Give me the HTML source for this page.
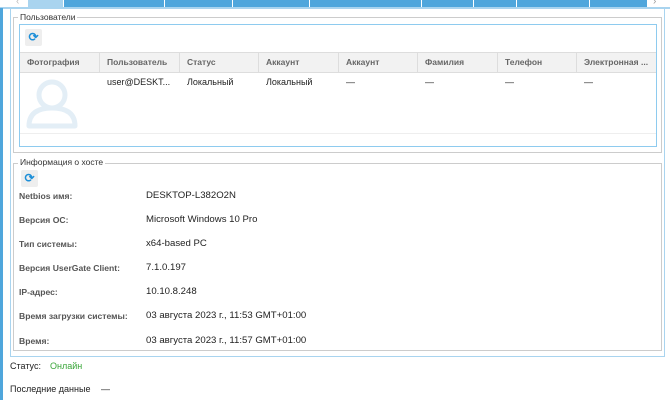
<!DOCTYPE html>
<html><head><meta charset="utf-8"><style>
*{margin:0;padding:0;box-sizing:border-box}
body{width:670px;height:400px;background:#fff;font-family:"Liberation Sans",sans-serif;font-size:9px;color:#222;position:relative;overflow:hidden}
.a{position:absolute}
.tab{position:absolute;top:0;height:7px;background:#4fa6dc;border-right:1px solid #fff}
.lbl{position:absolute;left:19px;font-weight:bold;color:#555;font-size:8.6px}
.val{position:absolute;left:146px;font-size:9.6px;color:#222}
.th{position:absolute;top:52px;height:21px;line-height:21px;padding-left:7px;font-weight:bold;color:#666;border-right:1px solid #ddd;font-size:8.5px}
.td{position:absolute;top:77px;padding-left:7px;font-size:9px}
</style></head><body>
<div class="a" style="left:0;top:7px;width:670px;height:2px;background:#a9d4ef"></div>
<div class="tab" style="left:28px;width:36px;background:#a9d4ef"></div>
<div class="tab" style="left:64px;width:101px"></div>
<div class="tab" style="left:165px;width:68px"></div>
<div class="tab" style="left:233px;width:77px"></div>
<div class="tab" style="left:310px;width:112px"></div>
<div class="tab" style="left:422px;width:52px"></div>
<div class="tab" style="left:474px;width:43px"></div>
<div class="tab" style="left:517px;width:73px"></div>
<div class="tab" style="left:590px;width:58px"></div>
<div class="a" style="left:16px;top:-4px;color:#bbb;font-size:10px">‹</div>
<div class="a" style="left:653px;top:-4px;color:#999;font-size:10px">›</div>
<div class="a" style="left:0;top:8px;width:3px;height:392px;background:#4fa6dc"></div>
<div class="a" style="left:10px;top:8px;width:655px;height:349px;border:1px solid #a9d4ef;border-top:none"></div>
<div class="a" style="left:13px;top:17px;width:649px;height:136px;border:1px solid #ccc"></div>
<div class="a" style="left:18px;top:12px;background:#fff;padding:0 2px;font-size:8.5px;color:#333">Пользователи</div>
<div class="a" style="left:19px;top:24px;width:638px;height:123px;border:1px solid #8ecbef"></div>
<div class="a" style="left:25px;top:29px;width:17px;height:17px;background:#eee;border-radius:2px;color:#1e8fd8;font-size:12px;line-height:17px;text-align:center;font-weight:bold">⟳</div>
<div class="a" style="left:20px;top:52px;width:636px;height:21px;background:#f2f2f2;border-top:1px solid #ddd;border-bottom:1px solid #ddd"></div>
<div class="th" style="left:20px;width:80px">Фотография</div>
<div class="th" style="left:100px;width:80px">Пользователь</div>
<div class="th" style="left:180px;width:79px">Статус</div>
<div class="th" style="left:259px;width:80px">Аккаунт</div>
<div class="th" style="left:339px;width:79px">Аккаунт</div>
<div class="th" style="left:418px;width:80px">Фамилия</div>
<div class="th" style="left:498px;width:79px">Телефон</div>
<div class="th" style="left:577px;width:79px;border:none">Электронная ...</div>
<div class="td" style="left:100px">user@DESKT...</div>
<div class="td" style="left:180px">Локальный</div>
<div class="td" style="left:259px">Локальный</div>
<div class="td" style="left:339px">—</div>
<div class="td" style="left:418px">—</div>
<div class="td" style="left:498px">—</div>
<div class="td" style="left:577px">—</div>
<div class="a" style="left:20px;top:133px;width:636px;height:1px;background:#eee"></div>
<svg class="a" style="left:25px;top:76px" width="56" height="54"><circle cx="27" cy="19" r="13" fill="none" stroke="#e3eef6" stroke-width="5"/><path d="M4 50 Q4 32 27 32 Q50 32 50 50 Z" fill="none" stroke="#e3eef6" stroke-width="5" stroke-linejoin="round"/></svg>
<div class="a" style="left:13px;top:163px;width:649px;height:188px;border:1px solid #ccc"></div>
<div class="a" style="left:18px;top:157px;background:#fff;padding:0 2px;font-size:8.5px;color:#333">Информация о хосте</div>
<div class="a" style="left:21px;top:170px;width:17px;height:17px;background:#eee;border-radius:2px;color:#1e8fd8;font-size:12px;line-height:17px;text-align:center;font-weight:bold">⟳</div>
<div class="lbl" style="top:191px">Netbios имя:</div><div class="val" style="top:190px">DESKTOP-L382O2N</div>
<div class="lbl" style="top:215px">Версия ОС:</div><div class="val" style="top:214px">Microsoft Windows 10 Pro</div>
<div class="lbl" style="top:239px">Тип системы:</div><div class="val" style="top:238px">x64-based PC</div>
<div class="lbl" style="top:263px">Версия UserGate Client:</div><div class="val" style="top:262px">7.1.0.197</div>
<div class="lbl" style="top:287px">IP-адрес:</div><div class="val" style="top:286px">10.10.8.248</div>
<div class="lbl" style="top:311px">Время загрузки системы:</div><div class="val" style="top:310px">03 августа 2023 г., 11:53 GMT+01:00</div>
<div class="lbl" style="top:336px">Время:</div><div class="val" style="top:335px">03 августа 2023 г., 11:57 GMT+01:00</div>
<div class="a" style="left:10px;top:361px;font-size:9px">Статус:</div>
<div class="a" style="left:50px;top:361px;font-size:9px;color:#3aa63a">Онлайн</div>
<div class="a" style="left:10px;top:384px;font-size:9px">Последние данные</div>
<div class="a" style="left:101px;top:384px;font-size:9px">—</div>
</body></html>
